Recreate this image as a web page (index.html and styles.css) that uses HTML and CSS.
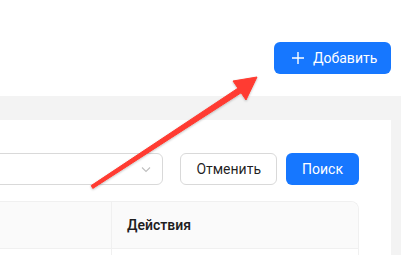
FILE: index.html
```html
<!DOCTYPE html>
<html lang="ru">
<head>
  <meta charset="UTF-8" />
  <meta name="viewport" content="width=device-width, initial-scale=1" />
  <title>Список</title>
  <link rel="stylesheet" href="styles.css">
</head>
<body>
  <header class="topbar">
    <button class="btn btn-primary btn-add" type="button">
      <svg class="plus" width="14" height="14" viewBox="0 0 14 14"><path d="M7 1v12M1 7h12" stroke="currentColor" stroke-width="1.4" fill="none"/></svg>
      Добавить
    </button>
  </header>

  <main class="content">
    <section class="card">
      <div class="filters">
        <div class="select">
          <svg class="chevron" width="12" height="12" viewBox="0 0 12 12"><path d="M2 4.5l4 4 4-4" stroke="#bfbfbf" stroke-width="1.1" fill="none"/></svg>
        </div>
        <button class="btn btn-default" type="button">Отменить</button>
        <button class="btn btn-primary" type="button">Поиск</button>
      </div>

      <div class="table">
        <div class="row head">
          <div class="cell"></div>
          <div class="cell actions">Действия</div>
        </div>
        <div class="row">
          <div class="cell"></div>
          <div class="cell actions"></div>
        </div>
      </div>
    </section>
  </main>

  <svg class="arrow" width="401" height="255" viewBox="0 0 401 255">
    <defs>
      <filter id="sh" x="-10%" y="-10%" width="120%" height="120%">
        <feDropShadow dx="0" dy="1" stdDeviation="1.2" flood-color="#000" flood-opacity="0.25"/>
      </filter>
    </defs>
    <polygon filter="url(#sh)" fill="#ff3b30" stroke="#ff3b30" stroke-width="1" stroke-linejoin="round"
      points="91.2,185.6 237.9,88.2 233,81 257,77 246,100 241.1,92.8 92.8,188.4"/>
  </svg>
</body>
</html>
```

FILE: styles.css
```css
* { box-sizing: border-box; }
body { margin: 0; font-family: Roboto, "Noto Sans", Arial, sans-serif; font-size: 14px; color: rgba(0,0,0,0.88); background: #fff; overflow: hidden; position: relative; width: 401px; height: 255px; }

.topbar { height: 96px; display: flex; justify-content: flex-end; align-items: flex-start; padding: 42px 10px 0 0; }

.btn { height: 32px; padding: 0 15px; border-radius: 6px; font-family: inherit; font-size: 14px; border: 1px solid transparent; display: inline-flex; align-items: center; gap: 8px; cursor: pointer; }
.btn-primary { background: #1677ff; color: #fff; }
.btn-default { background: #fff; border-color: #d9d9d9; color: rgba(0,0,0,0.88); }
.btn-add { width: 117px; padding-left: 16px; }
.plus { flex: none; }

.content { background: #f3f3f3; padding: 24px 10px 0 0; height: 159px; overflow: hidden; }
.card { background: #fff; height: 100%; margin-left: -60px; padding: 33px 32px 0 24px; }

.filters { display: flex; justify-content: flex-end; gap: 9px; }
.select { flex: 1; height: 32px; border: 1px solid #d9d9d9; border-radius: 6px; margin-right: 8px; display: flex; justify-content: flex-end; align-items: center; padding-right: 10px; }

.table { margin-top: 16px; border: 1px solid #f0f0f0; border-bottom: none; border-radius: 8px 8px 0 0; }
.row { display: flex; }
.row.head { background: #fafafa; height: 47px; border-bottom: 1px solid #f0f0f0; border-radius: 8px 8px 0 0; }
.cell { flex: 1; height: 100%; }
.row:not(.head) { height: 20px; }
.cell.actions { flex: none; width: 247px; border-left: 1px solid #f0f0f0; padding-left: 15px; display: flex; align-items: center; font-weight: 600; }

.arrow { position: absolute; left: 0; top: 0; pointer-events: none; }
```
